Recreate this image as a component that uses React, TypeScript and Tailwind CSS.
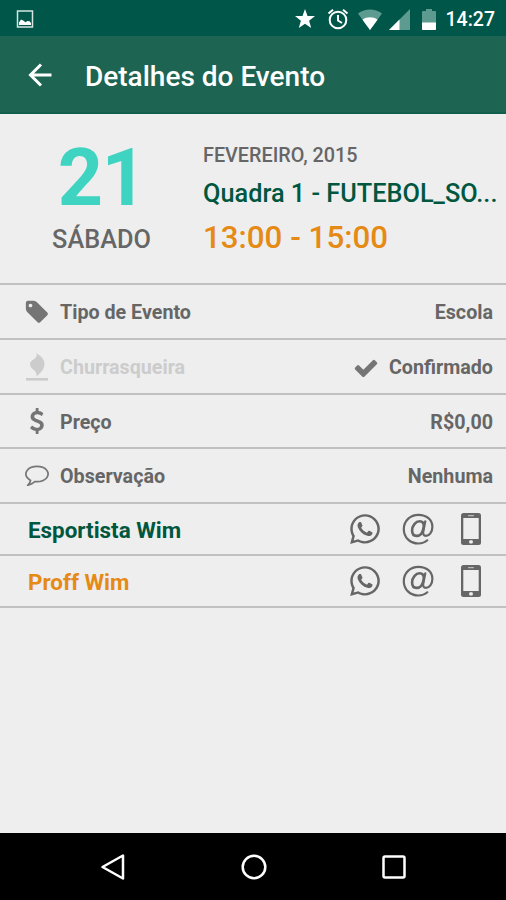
import React from "react";
import { FaWhatsapp } from "react-icons/fa";

interface IconProps {
  className?: string;
}

const TagIcon: React.FC<IconProps> = ({ className }) => (
  <svg viewBox="0 0 1792 1792" fill="currentColor" className={className}>
    <path d="M576 448q0-53-37.5-90.5t-90.5-37.5-90.5 37.5-37.5 90.5 37.5 90.5 90.5 37.5 90.5-37.5 37.5-90.5zm1067 576q0 53-37 90l-491 492q-39 37-91 37-53 0-90-37l-715-716q-38-37-64.5-101t-26.5-117v-416q0-52 38-90t90-38h416q53 0 117 26.5t102 64.5l715 714q37 39 37 91z" />
  </svg>
);

const CheckIcon: React.FC<IconProps> = ({ className }) => (
  <svg viewBox="0 0 1792 1792" fill="currentColor" className={className}>
    <path d="M1671 566q0 40-28 68l-724 724-136 136q-28 28-68 28t-68-28l-136-136-362-362q-28-28-28-68t28-68l136-136q28-28 68-28t68 28l294 295 656-657q28-28 68-28t68 28l136 136q28 28 28 68z" />
  </svg>
);

const DollarIcon: React.FC<IconProps> = ({ className }) => (
  <svg viewBox="0 0 1792 1792" fill="currentColor" className={className}>
    <path d="M1362 1185q0 153-99.5 263.5t-258.5 136.5v175q0 14-9 23t-23 9h-135q-13 0-22.5-9.5t-9.5-22.5v-175q-66-9-127.5-31t-101.5-44.5-74-48-46.5-37.5-17.5-18q-17-21-2-41l103-135q7-10 23-12 15-2 24 9l2 2q113 99 243 125 37 8 74 8 81 0 142.5-43t61.5-122q0-28-15-53t-33.5-42-58.5-37.5-66-32-80-32.5q-39-16-61.5-25t-61.5-26.5-62.5-31-56.5-35.5-53.5-42.5-43.5-49-35.5-58-21-66.5-8.5-78q0-138 98-242t255-134v-180q0-13 9.5-22.5t22.5-9.5h135q14 0 23 9t9 23v176q57 6 110.5 23t87 33.5 63.5 37.5 39 29 15 14q17 18 5 38l-81 146q-8 15-23 16-14 3-27-7-3-3-14.5-12t-39-26.5-58.5-32-74.5-26-85.5-11.5q-95 0-155 43t-60 111q0 26 8.5 48t29.5 41.5 39.5 33 56 31 60.5 27 70 27.5q53 20 81 31.5t76 35 75.5 42.5 62 50 53 63.5 31.5 76.5 13 94z" />
  </svg>
);

const CommentIcon: React.FC<IconProps> = ({ className }) => (
  <svg viewBox="0 0 1792 1792" fill="currentColor" className={className}>
    <path d="M896 384q-204 0-381.5 69.5t-282 187.5-104.5 255q0 112 71.5 213.5t201.5 175.5l87 50-27 96q-24 91-70 172 152-63 275-171l43-38 57 6q69 8 130 8 204 0 381.5-69.5t282-187.5 104.5-255-104.5-255-282-187.5-381.5-69.5zm896 512q0 174-120 321.5t-326 233-450 85.5q-70 0-145-8-198 175-460 242-49 14-114 22h-5q-15 0-27-10.5t-16-27.5v-1q-3-4-.5-12t2-10 4.5-9.5l6-9 7-8.5 8-9q7-8 31-34.5t34.5-38 31-39.5 32.5-51 27-59 26-76q-157-89-247.5-220t-90.5-281q0-174 120-321.5t326-233 450-85.5 450 85.5 326 233 120 321.5z" />
  </svg>
);

const FlameIcon: React.FC<IconProps> = ({ className }) => (
  <svg viewBox="0 0 24 28" fill="currentColor" className={className}>
    <path d="M11 0c5 3.2 8.400 6 8.400 11 0 5.200-3.600 9-7.900 12.400.3-2.500-.2-4-2.100-5.800C6.800 15.500 4.900 13.700 5 11c.2-4 5.100-4.600 6.400-7.600.5-1.200.3-2.300-.4-3.400z" />
    <rect x="1" y="25" width="22" height="2.6" />
  </svg>
);

const AtIcon: React.FC<IconProps> = ({ className }) => (
  <svg
    viewBox="0 0 32 32"
    fill="none"
    stroke="currentColor"
    strokeWidth="2.2"
    strokeLinecap="round"
    strokeLinejoin="round"
    className={className}
  >
    <path d="M25.3 27.3C23 29.4 19.7 30.5 16.3 30.5 8 30.5 1.8 24.3 1.800 16.2 1.8 7.8 8.2 1.8 16.5 1.8c8 0 13.9 5 13.9 11.9 0 5.400-3.300 9.200-6.400 9.200-2.600 0-3.200-2-2.700-4.600L23.300 8.300" />
    <path
      strokeWidth="2.6"
      d="M21.800 13.300c0-3.100-1.400-5-4.100-5-4 0-7.600 4.300-7.600 9.200 0 3.300 1.700 5.400 4.400 5.400 3.600 0 6.500-3.500 7.300-9.600z"
    />
  </svg>
);

const PhoneIcon: React.FC<IconProps> = ({ className }) => (
  <svg viewBox="0 0 20 32" className={className}>
    <rect width="20" height="32" rx="2.5" fill="#666" />
    <rect x="2.3" y="5" width="15.4" height="21" fill="#eee" />
    <rect x="7" y="2" width="6" height="1.3" rx=".6" fill="#bbb" />
    <rect x="8.2" y="27.2" width="3.6" height="3.4" rx="1" fill="#eee" />
  </svg>
);

const StatusBar: React.FC = () => (
  <div className="flex h-9 items-center bg-[#005648] pt-0.5 pr-[11px] pl-4 text-white">
    <svg viewBox="0 0 18 18" className="mr-auto size-[18px] text-[#d5e5e2]">
      <path
        fill="none"
        stroke="currentColor"
        strokeWidth="1.5"
        d="M1.5 1h15v16h-15z"
      />
      <path
        fill="#fff"
        d="M3 15v-2.500L5 9.500l2.200 1 2.300 1.800 2-1.300 2 .3 1.500 1.700v2z"
      />
    </svg>
    <svg viewBox="0 0 20 20" className="mr-3 size-5">
      <path
        fill="#fff"
        d="m10 0 2.5 6.900 7.500.2-5.900 4.600L16.200 19 10 14.700 3.800 19l2.100-7.300L0 7.100l7.500-.2z"
      />
    </svg>
    <svg
      viewBox="0 0 22 22"
      fill="none"
      stroke="#fff"
      strokeWidth="2"
      className="mr-[9px] size-[22px]"
    >
      <circle cx="11" cy="12" r="8.3" />
      <path d="M11 7v5.500l4 2.500M1.500 5.500 6 1.700M20.500 5.500 16 1.700" />
    </svg>
    <svg viewBox="0 0 24 21" className="mr-[7px] h-[21px] w-6">
      <path fill="#5d9a8f" d="M12 21 0 4.500C7-.8 17-.8 24 4.500z" />
      <path fill="#fff" d="m12 21-7.500-10.300c4.500-3.200 10.500-3.200 15 0z" />
    </svg>
    <svg viewBox="0 0 21 21" className="mr-3 size-[21px]">
      <path fill="#5d9a8f" d="M21 0v21H0z" />
      <path fill="#fff" d="M10.500 10.500V21H0z" />
    </svg>
    <svg viewBox="0 0 14 21" className="mr-2.5 h-[21px] w-3.5">
      <path
        fill="#5d9a8f"
        d="M4 0h6v2h3q1 0 1 1v17q0 1-1 1H1q-1 0-1-1V3q0-1 1-1h3z"
      />
      <path fill="#fff" d="M0 13.500h14V20q0 1-1 1H1q-1 0-1-1z" />
    </svg>
    <span className="pt-0.5 text-[19.5px] leading-none font-medium">14:27</span>
  </div>
);

interface DetailRowProps {
  icon: React.ReactNode;
  label: string;
  value: React.ReactNode;
  disabled?: boolean;
}

const DetailRow: React.FC<DetailRowProps> = ({
  icon,
  label,
  value,
  disabled,
}) => (
  <div className="flex h-[54.75px] items-center border-b-2 border-[#c0c0c0] pt-[3px] pr-[13px] pl-6 text-[19.7px] font-bold text-[#666]">
    <div
      className={
        disabled
          ? "flex items-center text-[#ccc]"
          : "flex items-center text-[#666]"
      }
    >
      <span className="mr-2.5 -mt-0.5 flex w-[26px] justify-center">
        {icon}
      </span>
      {label}
    </div>
    <div className="ml-auto flex items-center">{value}</div>
  </div>
);

interface ContactRowProps {
  name: string;
  color: string;
}

const ContactRow: React.FC<ContactRowProps> = ({ name, color }) => (
  <div className="flex h-[52px] items-center border-b-2 border-[#c0c0c0] pr-[25px] pl-7">
    <span className={`mr-auto pt-1 text-[22.4px] font-bold ${color}`}>
      {name}
    </span>
    <div className="flex items-center text-[#666]">
      <FaWhatsapp className="mr-[20px] size-[34px]" />
      <AtIcon className="mr-[27px] size-8" />
      <PhoneIcon className="h-8 w-5" />
    </div>
  </div>
);

const App: React.FC = () => {
  return (
    <div className="flex h-[900px] w-[506px] flex-col overflow-hidden bg-[#eee] font-['Roboto',sans-serif]">
      <StatusBar />

      <header className="flex h-[78px] items-center border-b-2 border-[#0f5f4a] bg-[#1d6453] pl-7 text-white">
        <svg
          viewBox="0 0 24 24"
          fill="none"
          stroke="#fff"
          strokeWidth="3"
          className="mt-0.5 mr-[33px] size-6"
        >
          <path d="M23.5 12H3M13 1.5 2.5 12 13 22.5" />
        </svg>
        <h1 className="pt-1.5 text-[28px] font-medium">Detalhes do Evento</h1>
      </header>

      <section className="flex h-[171px] border-b-2 border-[#c0c0c0]">
        <div className="flex w-[203px] flex-col items-center pt-6 text-[#666]">
          <span className="text-[79px] leading-[80px] font-bold tracking-[-1.5px] text-[#3fd3c1]">
            21
          </span>
          <span className="mt-1.5 text-[25.3px] leading-8 font-medium">
            SÁBADO
          </span>
        </div>
        <div className="flex flex-col pt-[30px] font-medium whitespace-nowrap">
          <span className="text-[19.8px] leading-6 text-[#666]">
            FEVEREIRO, 2015
          </span>
          <span className="mt-2.5 text-[25.3px] leading-8 text-[#00573f]">
            Quadra 1 - FUTEBOL_SO...
          </span>
          <span className="mt-2 text-[31.3px] leading-10 text-[#e58a14]">
            13:00 - 15:00
          </span>
        </div>
      </section>

      <DetailRow
        icon={<TagIcon className="size-[26px] text-[#757575]" />}
        label="Tipo de Evento"
        value="Escola"
      />
      <DetailRow
        icon={<FlameIcon className="h-7 w-6" />}
        label="Churrasqueira"
        value={
          <>
            <CheckIcon className="mr-2.5 size-[26px] text-[#757575]" />
            Confirmado
          </>
        }
        disabled
      />
      <DetailRow
        icon={<DollarIcon className="size-[26px] text-[#757575]" />}
        label="Preço"
        value="R$0,00"
      />
      <DetailRow
        icon={<CommentIcon className="-mt-1 size-6 text-[#757575]" />}
        label="Observação"
        value="Nenhuma"
      />
      <ContactRow name="Esportista Wim" color="text-[#00573f]" />
      <ContactRow name="Proff Wim" color="text-[#e58a14]" />

      <nav className="mt-auto flex h-[67px] items-center justify-between bg-black pr-[98px] pl-[99px]">
        <svg
          viewBox="0 0 28 28"
          fill="none"
          stroke="#fff"
          strokeWidth="2.5"
          strokeLinejoin="round"
          className="size-7"
        >
          <path d="M24 2.500v23L3.500 14z" />
        </svg>
        <svg
          viewBox="0 0 28 28"
          fill="none"
          stroke="#fff"
          strokeWidth="2.5"
          className="size-7"
        >
          <circle cx="14" cy="14" r="11.3" />
        </svg>
        <svg
          viewBox="0 0 28 28"
          fill="none"
          stroke="#fff"
          strokeWidth="2.5"
          className="size-7"
        >
          <rect x="3.5" y="3.5" width="21" height="21" rx="1.5" />
        </svg>
      </nav>
    </div>
  );
};

export default App;
